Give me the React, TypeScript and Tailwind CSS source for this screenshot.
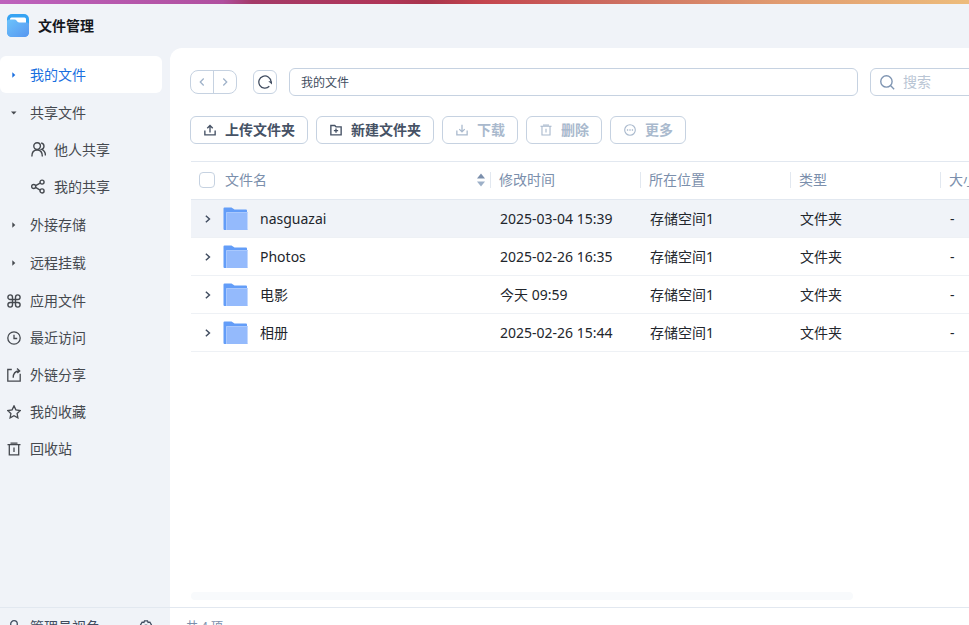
import type { ReactNode } from "react";

const FILES = [
  { name: "nasguazai", time: "2025-03-04 15:39" },
  { name: "Photos", time: "2025-02-26 16:35" },
  { name: "电影", time: "今天 09:59" },
  { name: "相册", time: "2025-02-26 15:44" },
];

function Icon({ size = 14, className = "", children }: { size?: number; className?: string; children: ReactNode }) {
  return (
    <svg width={size} height={size} viewBox="0 0 14 14" fill="none" stroke="currentColor" strokeWidth="1.3" className={`shrink-0 ${className}`} aria-hidden="true">
      {children}
    </svg>
  );
}

function TrashIcon({ small }: { small?: boolean }) {
  return (
    <Icon size={small ? 12 : 14} className={small ? "mx-px" : ""}>
      <path d="M0.500 2.700h13M3.500 1.100h7M2.300 2.700V12.900h9.400V2.700M7 5.500v4.500" />
    </Icon>
  );
}

function Logo() {
  return (
    <svg width="24" height="24" viewBox="0 0 24 24" aria-hidden="true">
      <defs>
        <linearGradient id="logo-front" x1="0" y1="0" x2="1" y2="1">
          <stop offset="0" stopColor="#6cc3fb" />
          <stop offset="1" stopColor="#5796f0" />
        </linearGradient>
      </defs>
      <rect x="1" y="0" width="22" height="23" rx="5" fill="#36a3f3" />
      <path d="M4 5q0-1.500 1.500-1.500h13q1.500 0 1.500 1.500v5H4z" fill="#fff" />
      <path d="M1 7.500q0-2 2-2h5.500q1.300 0 2 .9l1 1.300q.6.800 2 .8h7.500q2 0 2 2v7.500q0 5-5 5H6q-5 0-5-5z" fill="url(#logo-front)" />
    </svg>
  );
}

function Folder() {
  return (
    <svg width="26" height="24" viewBox="0 0 26 24" className="shrink-0" aria-hidden="true">
      <path d="M0.500 1.500q0-1 1-1h7l3 2h11.500q1 0 1 1V23H1.500q-1 0-1-1z" fill="#639df8" />
      <rect x="3" y="5" width="22" height="18" rx="1" fill="#94bafc" />
      <path d="M3.500 23V5.500H24" fill="none" stroke="#a9c8fd" strokeWidth="1" />
      <path d="M24.500 5.500V22.500" fill="none" stroke="#c3d8fd" strokeWidth="1" />
    </svg>
  );
}

function NavItem({ icon, label, active, child }: { icon: ReactNode; label: string; active?: boolean; child?: boolean }) {
  return (
    <li>
      <a
        href="#"
        className={`flex h-[37px] items-center rounded-md ${child ? "gap-2 pl-[31px]" : "gap-[9px] pl-[7px]"} ${active ? "bg-white text-[#1a6fe0]" : "text-[#45494f]"}`}
      >
        {icon}
        {label}
      </a>
    </li>
  );
}

function Caret({ open }: { open?: boolean }) {
  return (
    <Icon>
      <path d={open ? "M4 5.500h5.500L6.750 8.500z" : "M5.300 4.200v5.600L8.300 7z"} fill="currentColor" stroke="none" />
    </Icon>
  );
}

function Sidebar() {
  return (
    <nav className="w-[170px] shrink-0 pt-2 pr-2">
      <ul className="flex flex-col gap-px">
        <NavItem icon={<Caret />} label="我的文件" active />
        <li>
          <ul>
            <NavItem icon={<Caret open />} label="共享文件" />
            <NavItem
              child
              label="他人共享"
              icon={
                <Icon size={15}>
                  <circle cx="5.700" cy="3.800" r="3.100" />
                  <path d="M0.800 13.500c0-3.500 1.800-6 4.900-6s4.900 2.500 4.900 6M9.500 0.900c3.400.6 3.400 5.200 0.400 6 2.200.8 3.500 2.600 3.600 5.600" />
                </Icon>
              }
            />
            <NavItem
              child
              label="我的共享"
              icon={
                <Icon size={15}>
                  <circle cx="2.500" cy="7" r="1.900" />
                  <circle cx="10.300" cy="2.900" r="1.900" />
                  <circle cx="10.300" cy="11.100" r="1.900" />
                  <path d="M4.300 6.200L8.500 3.800M4.300 7.900L8.500 10.300" />
                </Icon>
              }
            />
          </ul>
        </li>
        <NavItem icon={<Caret />} label="外接存储" />
        <NavItem icon={<Caret />} label="远程挂载" />
        <li>
          <ul>
            <NavItem
              label="应用文件"
              icon={
                <Icon>
                  <path
                    d="M5.500 5.500H3.200a2.300 2.300 0 1 1 2.300-2.300zM8.500 5.500h2.300a2.300 2.300 0 1 0-2.300-2.300zM5.500 8.500H3.200a2.300 2.300 0 1 0 2.300 2.300zM8.500 8.500h2.300a2.300 2.300 0 1 1-2.300 2.300zM5.500 5.500h3v3h-3z"
                    strokeWidth="1.400"
                  />
                </Icon>
              }
            />
            <NavItem
              label="最近访问"
              icon={
                <Icon>
                  <circle cx="7" cy="7" r="6.200" />
                  <path d="M7 3.800v3.700h3.200" />
                </Icon>
              }
            />
            <NavItem
              label="外链分享"
              icon={
                <Icon>
                  <path d="M4.800 1.500H0.800v11.700h12.400V5.800M6.200 9.800c0-4.300 1.300-6.600 5.800-6.800M10 0.500l2.700 2.500L10.300 5" />
                </Icon>
              }
            />
            <NavItem
              label="我的收藏"
              icon={
                <Icon>
                  <path d="M7 0.900l1.900 4 4.400.6-3.200 3 .8 4.400L7 10.800l-3.900 2.100.8-4.400-3.200-3 4.400-.6z" />
                </Icon>
              }
            />
            <NavItem label="回收站" icon={<TrashIcon />} />
          </ul>
        </li>
      </ul>
    </nav>
  );
}

function ToolButton({ icon, label, disabled }: { icon: ReactNode; label: string; disabled?: boolean }) {
  return (
    <button
      type="button"
      disabled={disabled}
      className="flex h-7 shrink-0 items-center gap-2 rounded-md border border-[#c6d2e1] bg-white px-3 font-bold text-[#465265] disabled:text-[#a9b9cd]"
    >
      {icon}
      {label}
    </button>
  );
}

function Toolbar() {
  return (
    <div className="flex h-7 items-center">
      <div className="flex h-6 shrink-0 rounded-lg border border-[#c6d2e1] text-[#9fb2c9]">
        <button type="button" aria-label="后退" className="flex w-[23px] items-center justify-center border-r border-[#c6d2e1]">
          <Icon size={12}><path d="M9 3L5 7L9 11" strokeWidth="1.500" /></Icon>
        </button>
        <button type="button" aria-label="前进" className="flex w-[22px] items-center justify-center">
          <Icon size={12}><path d="M5 3L9 7L5 11" strokeWidth="1.500" /></Icon>
        </button>
      </div>
      <button type="button" aria-label="刷新" className="ml-4 flex size-6 shrink-0 items-center justify-center rounded-md border border-[#c6d2e1] text-[#414d60]">
        <Icon>
          <path d="M11.300 11.300A6.100 6.100 0 1 1 13 6.500" />
          <path d="M10.300 6.200h3.700v3.200z" fill="currentColor" stroke="none" />
        </Icon>
      </button>
      <input
        type="text"
        aria-label="路径"
        defaultValue="我的文件"
        className="ml-3 h-7 min-w-0 flex-1 rounded-md border border-[#c6d2e1] px-[11px] text-xs text-[#414d60] outline-none"
      />
      <label className="-mr-20 ml-3 flex h-7 w-[179px] shrink-0 items-center gap-2 rounded-md border border-[#c6d2e1] px-[9px] text-[#7f95b2]">
        <Icon size={15}>
          <circle cx="6" cy="6" r="5.300" />
          <path d="M9.800 9.800l3.400 3.400" />
        </Icon>
        <input type="search" aria-label="搜索" placeholder="搜索" className="w-full min-w-0 text-sm outline-none placeholder:text-[#b9c5d4]" />
      </label>
    </div>
  );
}

function FileTable() {
  return (
    <table className="w-[900px] table-fixed border-separate border-spacing-0">
      <thead>
        <tr className="h-[39px] text-left text-[#7b8fac]">
          <th className="w-[300px] border-y border-[#e2e8f0] pr-[5px] pb-0.5 pl-2 font-normal">
            <div className="flex items-center">
              <input type="checkbox" aria-label="全选" className="size-4 appearance-none rounded border border-[#c6d2e1] bg-white" />
              <span className="ml-2.5 flex-1">文件名</span>
              <button type="button" aria-label="排序">
                <svg width="10" height="14" viewBox="0 0 10 14" aria-hidden="true">
                  <path d="M5 0.500L9 5.500H1z" fill="#7b8fac" />
                  <path d="M5 13.500L1 8.500h8z" fill="#9db0c8" />
                </svg>
              </button>
            </div>
          </th>
          {["修改时间", "所在位置", "类型", "大小"].map((title) => (
            <th key={title} className="w-[150px] border-y border-[#e2e8f0] pb-0.5 font-normal">
              <div className="-ml-px flex h-4 items-center border-l border-[#e2e8f0] pl-2">{title}</div>
            </th>
          ))}
        </tr>
      </thead>
      <tbody>
        {FILES.map((file, i) => (
          <tr key={file.name} className={`h-[38px] text-[#22262c] ${i === 0 ? "bg-[#f0f3f8]" : ""}`}>
            <td className="border-b border-[#eef1f5] pl-[11px]">
              <div className="flex items-center">
                <button type="button" aria-label="展开" className="mr-[9px] text-[#414d60]">
                  <Icon size={12}><path d="M4.500 3.200L8.700 7L4.500 10.800" strokeWidth="1.700" /></Icon>
                </button>
                <Folder />
                <span className="ml-[11px]">{file.name}</span>
              </div>
            </td>
            <td className="border-b border-[#eef1f5] pl-[9px]">{file.time}</td>
            <td className="border-b border-[#eef1f5] pl-[9px]">存储空间1</td>
            <td className="border-b border-[#eef1f5] pl-[9px]">文件夹</td>
            <td className="border-b border-[#eef1f5] pl-[9px]">-</td>
          </tr>
        ))}
      </tbody>
    </table>
  );
}

export default function App() {
  return (
    <div className="flex h-screen flex-col overflow-hidden bg-[#f0f3f8] font-['Noto_Sans','Noto_Sans_CJK_SC',sans-serif] text-sm leading-5">
      <div className="h-1 shrink-0 bg-[linear-gradient(to_right,#bd62bd,#b04f9f_23%,#a43a68_26%,#b03558_40%,#a8344c_44%,#c4454e_50%,#cc6c60_63%,#e09a70_80%,#edbc7c)]" />
      <header className="flex h-11 shrink-0 items-center gap-2 pl-1.5">
        <Logo />
        <h1 className="font-bold text-[#15181d]">文件管理</h1>
      </header>

      <div className="flex min-h-0 flex-1">
        <Sidebar />
        <main className="flex min-w-0 flex-1 flex-col overflow-hidden rounded-tl-xl bg-white pt-5 pl-5">
          <Toolbar />
          <div className="mt-5 flex gap-2">
            <ToolButton
              label="上传文件夹"
              icon={<Icon size={12} className="mx-px"><path d="M1 7.500v5.200h12V7.500M7 10V2M3.800 5L7 1.800 10.200 5" strokeWidth="1.600" /></Icon>}
            />
            <ToolButton
              label="新建文件夹"
              icon={<Icon size={12} className="mx-px"><path d="M1 1.700h4.500l1.500 1.600h6v9.400H1zM7 5.300v5M4.500 7.800h5" strokeWidth="1.600" /></Icon>}
            />
            <ToolButton
              disabled
              label="下载"
              icon={<Icon size={12} className="mx-px"><path d="M1 7.500v5.200h12V7.500M7 1v8M3.800 6L7 9.200 10.200 6" strokeWidth="1.500" /></Icon>}
            />
            <ToolButton disabled label="删除" icon={<TrashIcon small />} />
            <ToolButton
              disabled
              label="更多"
              icon={
                <Icon size={12} className="mx-px">
                  <circle cx="7" cy="7" r="6.200" />
                  <path d="M3.400 7h1.500M6.250 7h1.500M9.100 7h1.500" strokeWidth="1.500" />
                </Icon>
              }
            />
          </div>
          <div className="mt-[17px] ml-px min-h-0 flex-1 overflow-hidden">
            <FileTable />
          </div>
          <div className="mb-[7px] ml-px h-2 w-[85%] rounded-full bg-[#f8fafc]" />
        </main>
      </div>

      {/* status bar runs past the bottom edge of the window */}
      <footer className="-mb-5 flex h-[38px] shrink-0 border-t border-[#e2e8f0]">
        <div className="flex w-[170px] shrink-0 items-center gap-[9px] pr-[17px] pl-[7px] text-[#414d60]">
          <Icon>
            <circle cx="7" cy="4" r="3.300" />
            <path d="M1 13.500c0-3.500 2.500-5.500 6-5.500s6 2 6 5.500" />
          </Icon>
          <span className="flex-1">管理员视角</span>
          <button type="button" aria-label="设置">
            <Icon>
              <path d="M5.500 0.800h3l.6 1.700 1.800-.3 1.500 2.600L11.300 7l1.100 2.200-1.500 2.600-1.800-.3-.6 1.700h-3l-.6-1.700-1.800.3-1.500-2.600L2.700 7 1.600 4.800l1.500-2.600 1.800.3z" />
              <circle cx="7" cy="7" r="1.900" />
            </Icon>
          </button>
        </div>
        <div className="flex flex-1 items-center bg-white pl-4 text-xs text-[#7b8fac]">共 4 项</div>
      </footer>
    </div>
  );
}
